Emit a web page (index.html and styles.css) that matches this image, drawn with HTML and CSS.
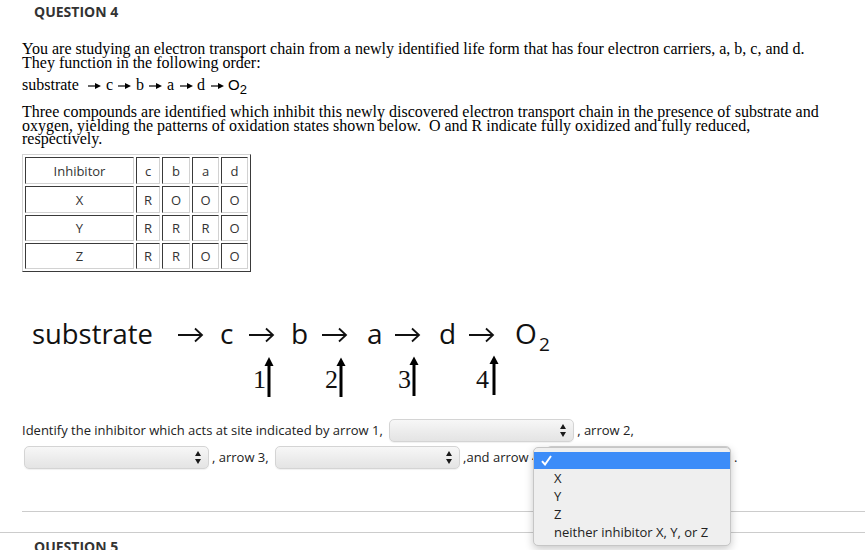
FILE: index.html
```html
<!DOCTYPE html>
<html>
<head>
<meta charset="utf-8">
<title>Question 4</title>
<link rel="stylesheet" href="styles.css">
</head>
<body>
<div class="page">
  <div class="question">
    <h2 class="qtitle">QUESTION 4</h2>
    <div class="qbody">
      <p class="serif intro">You are studying an electron transport chain from a newly identified life form that has four electron carriers, a, b, c, and d.<br>They function in the following order:</p>
      <p class="serif chain">substrate&nbsp;&nbsp;<svg class="sarr" width="13" height="8" viewBox="0 0 13 8"><path d="M0 4H8"/><polygon points="7,1 13,4 7,7"/></svg> c <svg class="sarr" width="13" height="8" viewBox="0 0 13 8"><path d="M0 4H8"/><polygon points="7,1 13,4 7,7"/></svg> b <svg class="sarr" width="13" height="8" viewBox="0 0 13 8"><path d="M0 4H8"/><polygon points="7,1 13,4 7,7"/></svg> a <svg class="sarr" width="13" height="8" viewBox="0 0 13 8"><path d="M0 4H8"/><polygon points="7,1 13,4 7,7"/></svg> d <svg class="sarr" width="13" height="8" viewBox="0 0 13 8"><path d="M0 4H8"/><polygon points="7,1 13,4 7,7"/></svg> <span class="oxy">O<sub>2</sub></span></p>
      <p class="serif desc">Three compounds are identified which inhibit this newly discovered electron transport chain in the presence of substrate and<br>oxygen, yielding the patterns of oxidation states shown below.&nbsp; O and R indicate fully oxidized and fully reduced,<br>respectively.</p>
      <table class="states">
        <tr class="r1"><td class="inh">Inhibitor</td><td class="cc">c</td><td class="cb">b</td><td class="ca">a</td><td class="cd">d</td></tr>
        <tr class="r1"><td>X</td><td>R</td><td>O</td><td>O</td><td>O</td></tr>
        <tr class="r2"><td>Y</td><td>R</td><td>R</td><td>R</td><td>O</td></tr>
        <tr class="r2"><td>Z</td><td>R</td><td>R</td><td>O</td><td>O</td></tr>
      </table>
      <svg class="diagram" width="600" height="110" viewBox="0 0 600 110">
        <g class="dg">
          <text x="32" y="44" textLength="121" lengthAdjust="spacingAndGlyphs">substrate</text>
          <text x="220" y="44">c</text>
          <text x="291" y="44">b</text>
          <text x="367" y="44">a</text>
          <text x="439" y="44">d</text>
          <text x="515" y="44">O</text>
          <text x="539" y="51" class="sub">2</text>
        </g>
        <g class="rarr">
          <path d="M178 35H202M195 28.5L202 35L195 41.5"/>
          <path d="M249 35H273M266 28.5L273 35L266 41.5"/>
          <path d="M322 35H346M339 28.5L346 35L339 41.5"/>
          <path d="M395 35H419M412 28.5L419 35L412 41.5"/>
          <path d="M469 35H493M486 28.5L493 35L486 41.5"/>
        </g>
        <g class="uarr">
          <path d="M269 97V64"/>
          <path d="M341 97V64"/>
          <path d="M414 96V63"/>
          <path d="M494 95V62"/>
        </g>
        <g class="uhead">
          <polygon points="264.5,66 269,57 273.5,66"/>
          <polygon points="336.5,66 341,57.5 345.5,66"/>
          <polygon points="409.5,65 414,56.5 418.5,65"/>
          <polygon points="489.5,64 494,55.5 498.5,64"/>
        </g>
        <g class="num">
          <text x="266" y="88">1</text>
          <text x="338" y="88">2</text>
          <text x="411" y="88">3</text>
          <text x="489" y="88">4</text>
        </g>
      </svg>
      <div class="answer">
        <div class="arow">Identify the inhibitor which acts at site indicated by arrow 1, <span class="sel"><svg class="updown" width="6" height="13" viewBox="0 0 6 13"><polygon points="0,5 3,0 6,5"/><polygon points="0,8 3,13 6,8"/></svg></span>, arrow 2,</div>
        <div class="arow"><span class="sel first"><svg class="updown" width="6" height="13" viewBox="0 0 6 13"><polygon points="0,5 3,0 6,5"/><polygon points="0,8 3,13 6,8"/></svg></span>, arrow 3, <span class="sel"><svg class="updown" width="6" height="13" viewBox="0 0 6 13"><polygon points="0,5 3,0 6,5"/><polygon points="0,8 3,13 6,8"/></svg></span>,and arrow 4 <span class="sel"><svg class="updown" width="6" height="13" viewBox="0 0 6 13"><polygon points="0,5 3,0 6,5"/><polygon points="0,8 3,13 6,8"/></svg></span>.</div>
      </div>
    </div>
    <div class="rule-inner"></div>
  </div>
  <div class="rule-outer"></div>
  <h2 class="qtitle next">QUESTION 5</h2>

  <div class="menu">
    <div class="opt on"><svg class="check" width="11" height="11" viewBox="0 0 11 11"><path d="M1 6.2L4 9.5L10 1"/></svg></div>
    <div class="opt">X</div>
    <div class="opt">Y</div>
    <div class="opt">Z</div>
    <div class="opt">neither inhibitor X, Y, or Z</div>
  </div>
</div>
</body>
</html>
```

FILE: styles.css
```css
* {
  box-sizing: border-box;
}

html,
body {
  margin: 0;
  padding: 0;
  background: #ffffff;
}

body {
  font-family: "Open Sans", "Liberation Sans", sans-serif;
  color: #222222;
}

.page {
  position: relative;
  width: 865px;
  height: 550px;
  overflow: hidden;
}

.qtitle {
  margin: 0;
  padding: 1px 0 0 34px;
  font-size: 14px;
  line-height: 21px;
  font-weight: 700;
  color: #333333;
}

.qtitle.next {
  margin-top: 2px;
}

.qbody {
  padding-left: 22px;
}

.serif {
  font-family: "Liberation Serif", "Times New Roman", serif;
  font-size: 16px;
  line-height: 13.5px;
  color: #000000;
  margin: 0;
  white-space: nowrap;
}

.intro {
  margin-top: 20px;
}

.chain {
  margin-top: 9px;
}

.sarr {
  display: inline-block;
  vertical-align: 0;
  margin: 0 0.5px 0 1.5px;
}

.sarr path {
  stroke: #000000;
  stroke-width: 1.2;
}

.sarr polygon {
  fill: #000000;
}

.oxy {
  font-family: "Liberation Sans", Arial, sans-serif;
  font-size: 15px;
}

.oxy sub {
  font-size: 13px;
  line-height: 0;
  vertical-align: -4px;
}

.desc {
  margin-top: 13.5px;
}

/* table of oxidation states */
.states {
  margin-top: 8.5px;
  border-collapse: separate;
  border-spacing: 2px;
  border: 1px solid;
  border-color: #d2d2d2 #3a3a3a #3a3a3a #d2d2d2;
  font-size: 13px;
  color: #333333;
}

.states td {
  padding: 0;
  border: 1px solid;
  border-color: #3a3a3a #d2d2d2 #d2d2d2 #3a3a3a;
  text-align: center;
  vertical-align: middle;
}

.states .r1 td {
  height: 27px;
}

.states .r2 td {
  height: 26px;
}

.states .inh {
  width: 109px;
}

.states .cc {
  width: 24px;
}

.states .cb {
  width: 28px;
}

.states .ca {
  width: 27px;
}

.states .cd {
  width: 27px;
}

/* chain diagram */
.diagram {
  display: block;
  margin: 28px 0 0 -22px;
}

.dg text {
  font-family: "Open Sans", "Liberation Sans", sans-serif;
  font-size: 28px;
  fill: #111111;
}

.dg .sub {
  font-size: 19px;
}

.rarr path {
  fill: none;
  stroke: #111111;
  stroke-width: 1.8;
}

.uarr path {
  stroke: #000000;
  stroke-width: 3;
}

.uhead polygon {
  fill: #000000;
}

.num text {
  font-family: "Liberation Serif", "Times New Roman", serif;
  font-size: 26px;
  text-anchor: end;
  fill: #111111;
}

/* answer rows */
.answer {
  margin-top: 7px;
}

.arow {
  height: 27px;
  line-height: 27px;
  font-size: 13px;
  white-space: nowrap;
  color: #222222;
}

.sel {
  position: relative;
  display: inline-block;
  vertical-align: top;
  width: 185px;
  height: 23px;
  margin: 2px 3px;
  border: 1px solid #d4d4d4;
  border-radius: 5px;
  background: linear-gradient(to bottom, #f7f7f7 0%, #ececec 55%, #e4e4e4 100%);
  box-shadow: 0 1px 1px rgba(0, 0, 0, 0.06);
}

.sel.first {
  margin-left: 2px;
}

.updown {
  position: absolute;
  right: 7px;
  top: 4px;
}

.updown polygon {
  fill: #1a1a1a;
}

.rule-inner {
  margin: 40px 0 0 22px;
  border-top: 1px solid #cccccc;
}

.rule-outer {
  margin-top: 20px;
  border-top: 1px solid #cccccc;
}

/* open popup menu */
.menu {
  position: absolute;
  left: 533px;
  top: 447px;
  width: 198px;
  padding: 4px 0;
  background: #efefef;
  border: 1px solid #c6c6c6;
  border-radius: 5px;
  box-shadow: 0 3px 8px rgba(0, 0, 0, 0.22);
  font-size: 13px;
  color: #222222;
}

.opt {
  position: relative;
  height: 18px;
  line-height: 18px;
  padding-left: 20px;
  white-space: nowrap;
}

.opt.on {
  height: 17px;
  background: #3c8cf8;
}

.check {
  position: absolute;
  left: 7px;
  top: 3px;
}

.check path {
  fill: none;
  stroke: #ffffff;
  stroke-width: 2;
}
```
